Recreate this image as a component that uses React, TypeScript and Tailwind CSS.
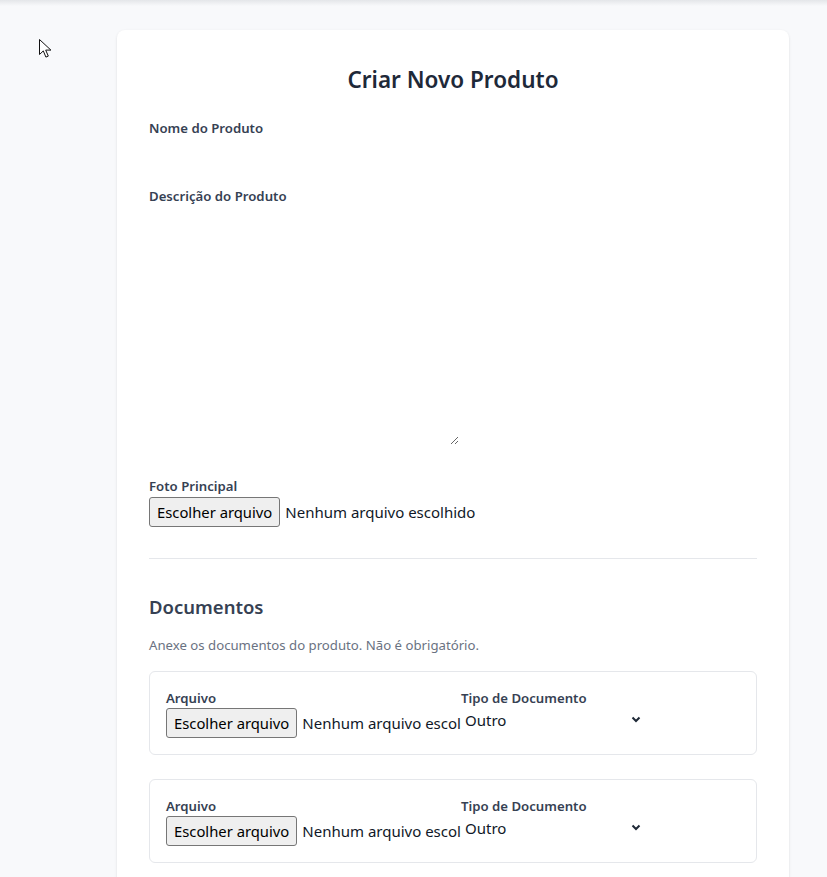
import { useState } from 'react';

type DocRow = { id: number; tipo: string };

function FakeFileInput({ clip }: { clip?: boolean }) {
  return (
    <div className={`flex h-[30px] items-center ${clip ? 'w-[295px] overflow-hidden whitespace-nowrap' : ''}`}>
      <span className="flex h-[30px] shrink-0 items-center rounded-[3px] border border-[#767676] bg-[#efefef] px-[7px] text-[14.8px] text-black">
        Escolher arquivo
      </span>
      <span className="ml-[5px] shrink-0 text-[15px] text-gray-900">Nenhum arquivo escolhido</span>
    </div>
  );
}

function DocumentoCard({ doc }: { doc: DocRow }) {
  return (
    <div className="rounded-md border border-gray-200 p-4">
      <div className="flex">
        <div className="w-[295px] shrink-0">
          <label className="block text-[13.2px] leading-5 font-semibold text-gray-700">Arquivo</label>
          <FakeFileInput clip />
        </div>
        <div className="flex-1">
          <label className="block text-[13.2px] leading-5 font-semibold text-gray-700">Tipo de Documento</label>
          <div className="flex h-[24px] w-[187px] items-center justify-between pl-1 pr-[7px] text-[15px] text-gray-900">
            <span>{doc.tipo}</span>
            <svg className="-mt-[2px]" width="10" height="7" viewBox="0 0 10 7" fill="none">
              <path d="M1.5 1.5 5 5l3.5-3.5" stroke="#1f2937" strokeWidth="2" />
            </svg>
          </div>
        </div>
      </div>
    </div>
  );
}

export default function App() {
  const [docs] = useState<DocRow[]>([
    { id: 1, tipo: 'Outro' },
    { id: 2, tipo: 'Outro' },
  ]);

  return (
    <div className="relative min-h-screen bg-[#f8f9fb] font-['Noto_Sans',sans-serif]">
      {/* sombra do cabeçalho fora da tela */}
      <div className="h-[6px] bg-linear-to-b from-[#e4e6e9] to-transparent" />

      {/* ponteiro do mouse */}
      <svg className="absolute left-[39px] top-[39px]" width="14" height="20" viewBox="0 0 14 20">
        <path d="M0.5 0.5v15l3.8-3.6 2.6 6.2 2.4-1-2.6-6h5.2z" fill="#fff" stroke="#111" strokeWidth="1" strokeLinejoin="round" />
      </svg>

      <div className="ml-[117px] mt-[24px] w-[672px] rounded-lg bg-white p-8 pb-16 shadow-sm">
        <h1 className="text-center text-[22.5px] leading-9 font-semibold text-gray-800">Criar Novo Produto</h1>

        <form className="mt-5 flex flex-col" onSubmit={(e) => e.preventDefault()}>
          <label className="block text-[13.2px] leading-5 font-semibold text-gray-700">Nome do Produto</label>
          <input type="text" className="mt-1 block h-[24px] w-full bg-transparent outline-none" />

          <label className="mt-5 block text-[13.2px] leading-5 font-semibold text-gray-700">Descrição do Produto</label>
          <textarea className="mt-1 block h-[235px] w-[310px] bg-transparent outline-none" />

          <label className="mt-[31px] block text-[13.2px] leading-5 font-semibold text-gray-700">Foto Principal</label>
          <div className="mt-px">
            <FakeFileInput />
          </div>

          <hr className="mt-[31px] border-gray-200" />

          <h2 className="mt-[34px] text-[18.5px] leading-7 font-semibold text-gray-700">Documentos</h2>
          <p className="mt-[14px] text-[13.2px] leading-5 text-gray-500">Anexe os documentos do produto. Não é obrigatório.</p>

          <div className="mt-4 flex flex-col gap-6">
            {docs.map((doc) => (
              <DocumentoCard key={doc.id} doc={doc} />
            ))}
          </div>
        </form>
      </div>
    </div>
  );
}
